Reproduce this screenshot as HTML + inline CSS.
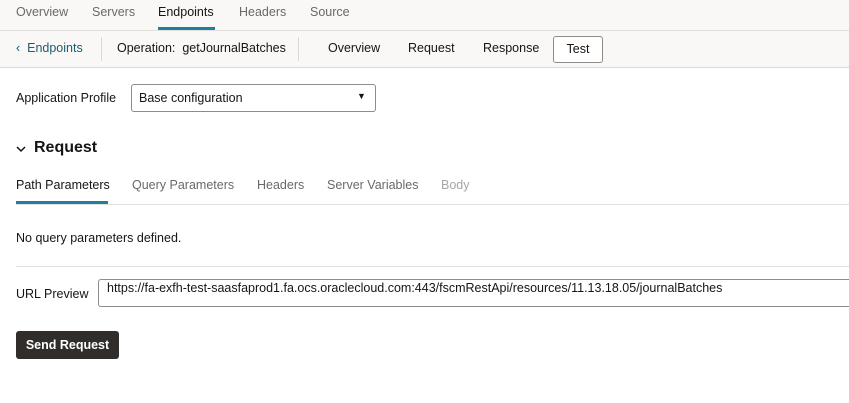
<!DOCTYPE html>
<html><head><style>
body{margin:0;width:849px;height:403px;background:#fff;font-family:"Liberation Sans",sans-serif;font-size:12.5px;color:#161513;position:relative;overflow:hidden}
.a{position:absolute;white-space:nowrap}
.g{color:#6b6966}
</style></head><body>
<div class="a" style="left:0;top:0;width:849px;height:67px;background:#f9f8f6"></div>
<div class="a" style="left:0;top:30px;width:849px;height:1px;background:#e2e0dd"></div>
<div class="a" style="left:0;top:67px;width:849px;height:1px;background:#dcdad6"></div>
<div class="a g" style="left:16px;top:5px">Overview</div>
<div class="a g" style="left:92px;top:5px">Servers</div>
<div class="a" style="left:158px;top:5px">Endpoints</div>
<div class="a" style="left:158px;top:27px;width:57px;height:3px;background:#227e9e"></div>
<div class="a g" style="left:239px;top:5px">Headers</div>
<div class="a g" style="left:310px;top:5px">Source</div>
<div class="a" style="left:16px;top:41px;color:#1d5c74">&#8249;&nbsp; Endpoints</div>
<div class="a" style="left:101px;top:37px;width:1px;height:24px;background:#dcdad6"></div>
<div class="a" style="left:117px;top:41px">Operation:&nbsp; getJournalBatches</div>
<div class="a" style="left:298px;top:37px;width:1px;height:24px;background:#dcdad6"></div>
<div class="a" style="left:328px;top:41px">Overview</div>
<div class="a" style="left:408px;top:41px">Request</div>
<div class="a" style="left:483px;top:41px">Response</div>
<div class="a" style="left:553px;top:36px;width:48px;height:25px;border:1px solid #8f8c88;border-radius:3px;text-align:center;line-height:25px;background:#fff">Test</div>
<div class="a" style="left:16px;top:91px">Application Profile</div>
<div class="a" style="left:131px;top:84px;width:243px;height:26px;border:1px solid #8f8c88;border-radius:3px"></div>
<div class="a" style="left:139px;top:91px">Base configuration</div>
<div class="a" style="left:357px;top:91px;font-size:9px">&#9660;</div>
<svg class="a" style="left:16px;top:145px" width="10" height="8"><path d="M1 2 L5 6 L9 2" fill="none" stroke="#161513" stroke-width="1.5"/></svg>
<div class="a" style="left:34px;top:139px;font-size:16px;font-weight:bold">Request</div>
<div class="a" style="left:16px;top:178px">Path Parameters</div>
<div class="a" style="left:16px;top:201px;width:92px;height:3px;background:#227e9e"></div>
<div class="a g" style="left:132px;top:178px">Query Parameters</div>
<div class="a g" style="left:257px;top:178px">Headers</div>
<div class="a g" style="left:327px;top:178px">Server Variables</div>
<div class="a" style="left:441px;top:178px;color:#a9a6a2">Body</div>
<div class="a" style="left:16px;top:204px;width:833px;height:1px;background:#e2e0dd"></div>
<div class="a" style="left:16px;top:231px">No query parameters defined.</div>
<div class="a" style="left:16px;top:266px;width:833px;height:1px;background:#e2e0dd"></div>
<div class="a" style="left:16px;top:287px">URL Preview</div>
<div class="a" style="left:98px;top:279px;width:760px;height:26px;border:1px solid #8f8c88;border-radius:3px"></div>
<div class="a" style="left:107px;top:281px">https://fa-exfh-test-saasfaprod1.fa.ocs.oraclecloud.com:443/fscmRestApi/resources/11.13.18.05/journalBatches</div>
<div class="a" style="left:16px;top:331px;width:103px;height:28px;background:#312d2a;border-radius:3px;color:#fff;font-weight:bold;text-align:center;line-height:28px">Send Request</div>
</body></html>
